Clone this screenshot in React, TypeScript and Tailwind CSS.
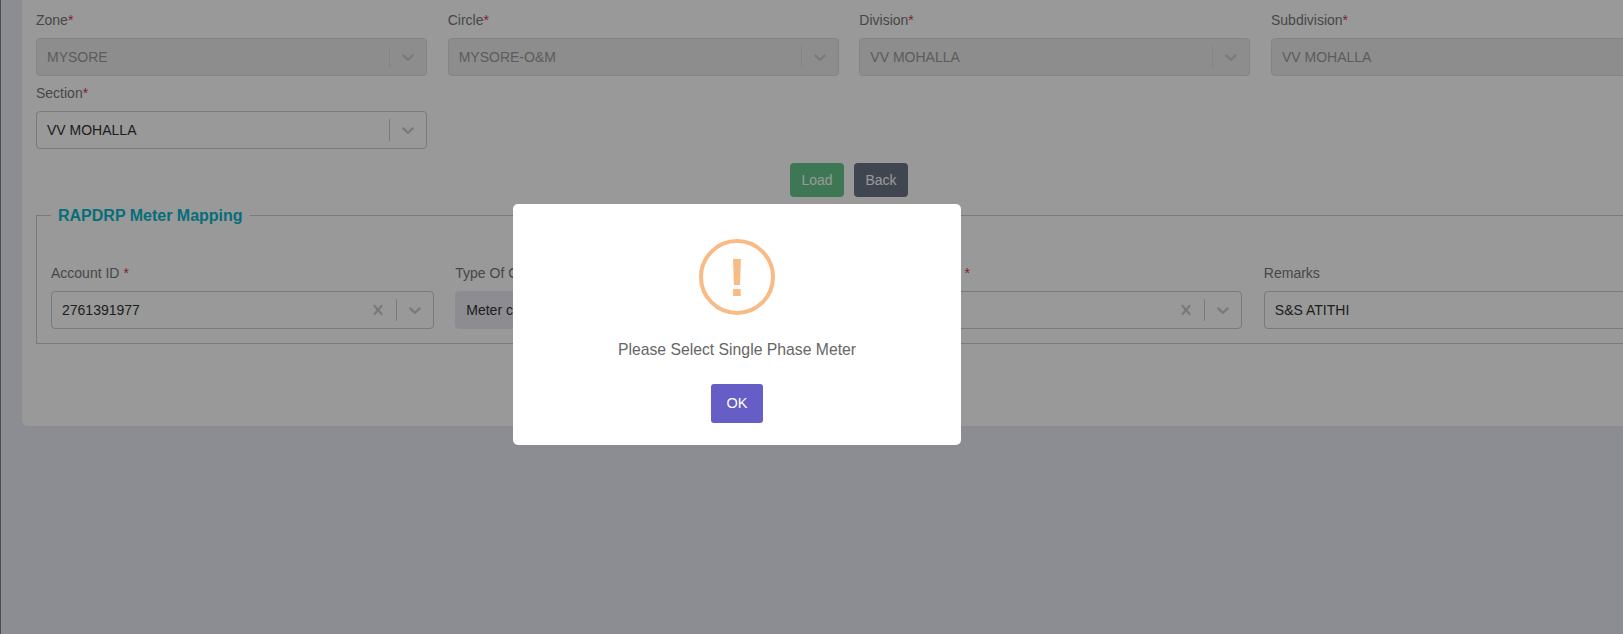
const sans = "font-['Liberation_Sans',Arial,sans-serif]";

const ChevronIcon = () => (
  <svg viewBox="0 0 20 20" className="h-5 w-5 fill-[#cccccc]">
    <path d="M4.516 7.548c0.436-0.446 1.043-0.481 1.576 0l3.908 3.747 3.908-3.747c0.533-0.481 1.141-0.446 1.576 0 0.436 0.445 0.408 1.197 0 1.615-0.406 0.418-4.695 4.502-4.695 4.502-0.217 0.223-0.502 0.335-0.787 0.335s-0.57-0.112-0.789-0.335c0 0-4.287-4.084-4.695-4.502s-0.436-1.17 0-1.615z" />
  </svg>
);

const ClearIcon = () => (
  <svg viewBox="0 0 20 20" className="h-5 w-5 fill-[#cccccc]">
    <path d="M14.348 14.849c-0.469 0.469-1.229 0.469-1.697 0l-2.651-3.030-2.651 3.029c-0.469 0.469-1.229 0.469-1.697 0-0.469-0.469-0.469-1.229 0-1.697l2.758-3.15-2.759-3.152c-0.469-0.469-0.469-1.228 0-1.697s1.228-0.469 1.697 0l2.652 3.031 2.651-3.031c0.469-0.469 1.228-0.469 1.697 0s0.469 1.229 0 1.697l-2.758 3.152 2.758 3.15c0.469 0.469 0.469 1.229 0 1.698z" />
  </svg>
);

const SelectBox = ({
  value,
  disabled,
  clearable,
}: {
  value?: string;
  disabled?: boolean;
  clearable?: boolean;
}) => (
  <div
    className={`flex h-[38px] items-center rounded border ${
      disabled ? 'border-[#dddddd] bg-[#ececec]' : 'border-[#cccccc] bg-white'
    }`}
  >
    <div
      className={`min-w-0 flex-1 truncate pl-[10px] text-sm ${
        disabled ? 'text-[#999999]' : 'text-[#333333]'
      }`}
    >
      {value}
    </div>
    {clearable && (
      <div className="flex w-9 justify-center">
        <ClearIcon />
      </div>
    )}
    <span
      className={`h-[22px] w-px ${disabled ? 'bg-[#dddddd]' : 'bg-[#cccccc]'}`}
    />
    <div className="flex w-9 justify-center">
      <ChevronIcon />
    </div>
  </div>
);

const Label = ({ text, spaced }: { text: string; spaced?: boolean }) => (
  <label className="mb-[7px] block text-sm leading-[21px] text-[#777777]">
    {text}
    {spaced && ' '}
    <span className="text-[#dc3545]">*</span>
  </label>
);

const App = () => {
  return (
    <div
      className={`relative h-[634px] w-[1623px] overflow-hidden border-l border-[#4a4b55] bg-[#e9ebf5] ${sans}`}
    >
      <div className="ml-[21px] w-[1650px] rounded-b-md bg-white px-[14px] pb-[82px] pt-[10px]">
        <div className="grid grid-cols-[391px_391px_391px_391px] gap-x-[20.67px] gap-y-[7px]">
          <div>
            <Label text="Zone" />
            <SelectBox value="MYSORE" disabled />
          </div>
          <div>
            <Label text="Circle" />
            <SelectBox value="MYSORE-O&M" disabled />
          </div>
          <div>
            <Label text="Division" />
            <SelectBox value="VV MOHALLA" disabled />
          </div>
          <div>
            <Label text="Subdivision" />
            <SelectBox value="VV MOHALLA" disabled />
          </div>
          <div>
            <Label text="Section" />
            <SelectBox value="VV MOHALLA" />
          </div>
        </div>

        <div className="mt-[14px] flex w-[1626px] justify-center gap-[10px]">
          <button className="h-[34px] w-[54px] rounded bg-[#66c78a] text-sm text-white">
            Load
          </button>
          <button className="h-[34px] w-[54px] rounded bg-[#6c7686] text-sm text-white">
            Back
          </button>
        </div>

        <fieldset className="mt-[8px] border border-[#cccccc] px-[14px] pb-[14px]">
          <legend className="ml-0 px-[7px] pt-[2px] text-base font-bold leading-[18px] text-[#0bb8cc]">
            RAPDRP Meter Mapping
          </legend>
          <div className="mt-[38px] grid grid-cols-[382.6px_382.6px_382.6px_382.6px] gap-x-[21.7px]">
            <div>
              <Label text="Account ID" spaced />
              <SelectBox value="2761391977" clearable />
            </div>
            <div>
              <label className="mb-[7px] block text-sm leading-[21px] text-[#777777]">
                Type Of Change
              </label>
              <div className="flex h-[38px] items-center rounded border border-[#e9e9f2] bg-[#e9e9f2] pl-[10px] text-sm text-[#333333]">
                Meter change
              </div>
            </div>
            <div>
              <Label text="Meter Serial No." spaced />
              <SelectBox clearable />
            </div>
            <div>
              <label className="mb-[7px] block text-sm leading-[21px] text-[#777777]">
                Remarks
              </label>
              <div className="flex h-[38px] items-center rounded border border-[#cccccc] bg-white pl-[10px] text-sm text-[#333333]">
                S&amp;S ATITHI
              </div>
            </div>
          </div>
        </fieldset>
      </div>

      <div className="absolute inset-0 bg-black/40" />

      <div className="absolute left-[512px] top-[204px] flex h-[241px] w-[448px] flex-col items-center rounded-[5px] bg-white pt-[35px]">
        <div className="flex h-[76px] w-[76px] items-center justify-center rounded-full border-4 border-[#f8bb86] text-[54px] font-bold leading-none text-[#f8bb86]">
          !
        </div>
        <p className="mt-[23px] text-[15.75px] leading-6 text-[#666666]">
          Please Select Single Phase Meter
        </p>
        <button className="mt-[22px] h-[39px] w-[52px] rounded-[3px] bg-[#665dc6] text-[14.5px] text-white">
          OK
        </button>
      </div>
    </div>
  );
};

export default App;
